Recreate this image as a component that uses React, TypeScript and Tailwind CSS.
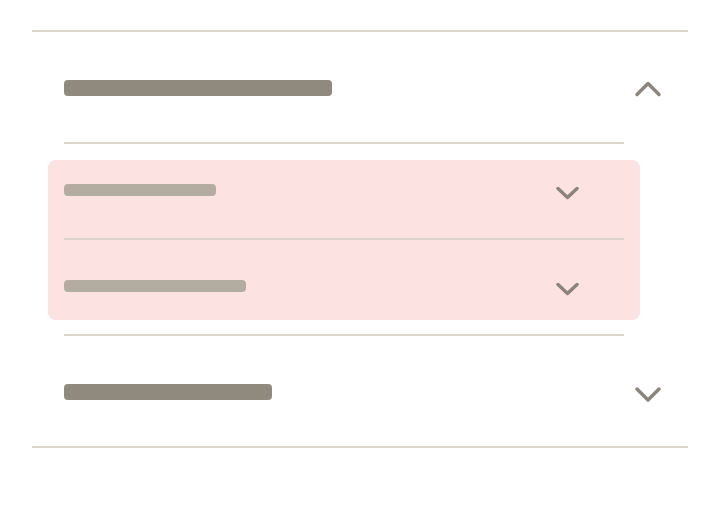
import React from "react";

function Chevron({ up, small }: { up?: boolean; small?: boolean }) {
  if (small) {
    return (
      <svg width="24" height="17" viewBox="0 0 24 17" className="shrink-0 mr-[45px]">
        <polyline points="3,4.5 12.5,13.5 22,4.5" fill="none" stroke="#8a847a" strokeWidth="3.4" strokeLinecap="round" strokeLinejoin="round" />
      </svg>
    );
  }
  return (
    <svg width="28" height="18" viewBox="0 0 28 18" className="shrink-0">
      <polyline
        points={up ? "3,14.5 14,3.5 25,14.5" : "3,5 14,16 25,5"}
        fill="none"
        stroke="#8a847a"
        strokeWidth="3.4"
        strokeLinecap="round"
        strokeLinejoin="round"
      />
    </svg>
  );
}

export default function App() {
  return (
    <div className="w-[720px] h-[520px] bg-white pt-[30px] px-8" style={{ fontFamily: "Inter, sans-serif" }}>
      <div className="border-y-2 border-[#dcd7cb]">
        <div className="flex items-start justify-between pl-8 pr-[26px] pt-12 h-[110px]">
          <div className="w-[268px] h-4 rounded-[4px] bg-[#8f897e]" />
          <Chevron up />
        </div>
        <div className="ml-8 mr-16 h-[2px] bg-[#dcd7cb]" />
        <div className="mt-4 ml-4 mr-12 rounded-lg bg-[#fde2e2] px-4 h-[160px]">
          <div className="flex items-start justify-between pt-6 h-[78px]">
            <div className="w-[152px] h-3 rounded-[4px] bg-[#b3ada1]" />
            <Chevron small />
          </div>
          <div className="h-[2px] bg-[#ddd5cb]" />
          <div className="flex items-start justify-between pt-10 h-[80px]">
            <div className="w-[182px] h-3 rounded-[4px] bg-[#b3ada1]" />
            <Chevron small />
          </div>
        </div>
        <div className="mt-[14px] ml-8 mr-16 h-[2px] bg-[#dcd7cb]" />
        <div className="flex items-start justify-between pl-8 pr-[26px] pt-12 h-[110px]">
          <div className="w-[208px] h-4 rounded-[4px] bg-[#8f897e]" />
          <Chevron />
        </div>
      </div>
    </div>
  );
}
